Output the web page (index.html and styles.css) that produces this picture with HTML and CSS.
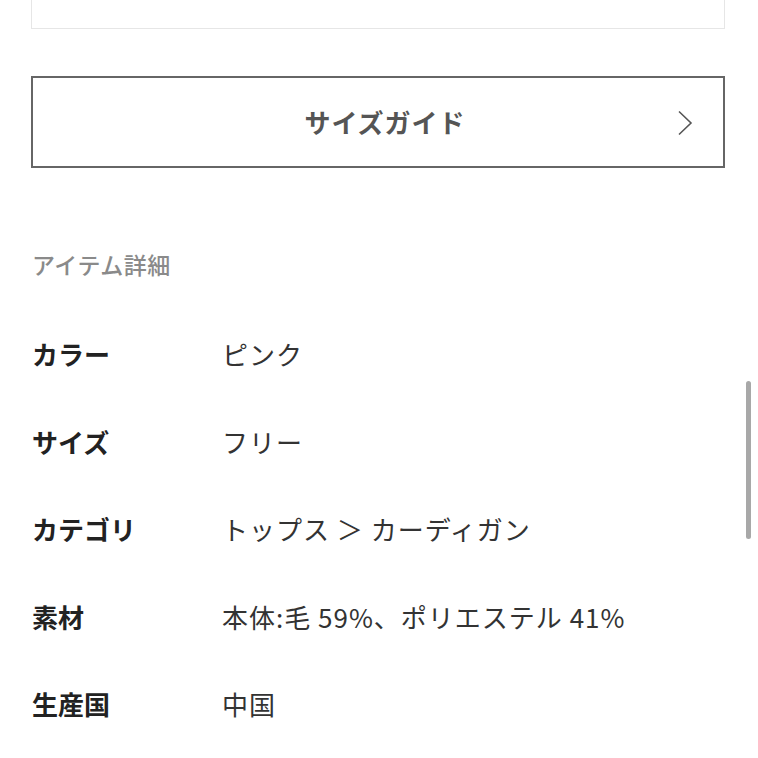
FILE: index.html
```html
<!DOCTYPE html>
<html lang="ja">
<head>
<meta charset="utf-8">
<title>アイテム詳細</title>
<link rel="stylesheet" href="styles.css">
</head>
<body>
<div class="page">
  <div class="top-box"></div>
  <a class="guide-btn" href="#">
    <span class="guide-label">サイズガイド</span>
    <svg class="chevron" width="16" height="26" viewBox="0 0 16 26" aria-hidden="true">
      <polyline points="2,1.5 14,13 2,24.5" fill="none" stroke="#555" stroke-width="1.6" stroke-linejoin="miter"/>
    </svg>
  </a>
  <h2 class="section-title">アイテム詳細</h2>
  <dl class="details">
    <div class="row"><dt>カラー</dt><dd>ピンク</dd></div>
    <div class="row"><dt>サイズ</dt><dd>フリー</dd></div>
    <div class="row"><dt>カテゴリ</dt><dd>トップス ＞ カーディガン</dd></div>
    <div class="row"><dt>素材</dt><dd>本体:毛 59%、ポリエステル 41%</dd></div>
    <div class="row"><dt>生産国</dt><dd>中国</dd></div>
  </dl>
</div>
<div class="scrollbar"></div>
</body>
</html>
```

FILE: styles.css
```css
html, body {
  margin: 0;
  padding: 0;
  background: #fff;
}
body {
  font-family: "Noto Sans CJK JP", "Noto Sans", sans-serif;
  color: #222;
  overflow: hidden;
}
.page {
  padding: 0 33px 0 31px;
}
.top-box {
  height: 28px;
  border: 1px solid #e6e6e6;
  border-top: none;
}
.guide-btn {
  margin-top: 47px;
  height: 86px;
  border: 2px solid #666;
  display: flex;
  align-items: center;
  justify-content: center;
  padding-left: 14px;
  padding-bottom: 2px;
  box-sizing: content-box;
  position: relative;
  text-decoration: none;
}
.guide-label {
  font-size: 26px;
  font-weight: 700;
  color: #555;
  letter-spacing: 1px;
}
.chevron {
  position: absolute;
  right: 30px;
  top: 32px;
}
.section-title {
  margin: 76px 0 0 1px;
  height: 40px;
  line-height: 40px;
  font-size: 23px;
  font-weight: 500;
  color: #8a8a8a;
  letter-spacing: 0.5px;
}
.details {
  margin: 26px 0 0 1px;
}
.row {
  display: grid;
  grid-template-columns: 190px 1fr;
  height: 87.5px;
  align-items: center;
}
.row dt {
  font-size: 26px;
  font-weight: 700;
  color: #222;
}
.row dd {
  margin: 0;
  font-size: 26px;
  font-weight: 400;
  color: #333;
  letter-spacing: 1px;
}
.scrollbar {
  position: fixed;
  left: 746px;
  top: 381px;
  width: 5px;
  height: 158px;
  border-radius: 3px;
  background: #a8a8a8;
}
```
